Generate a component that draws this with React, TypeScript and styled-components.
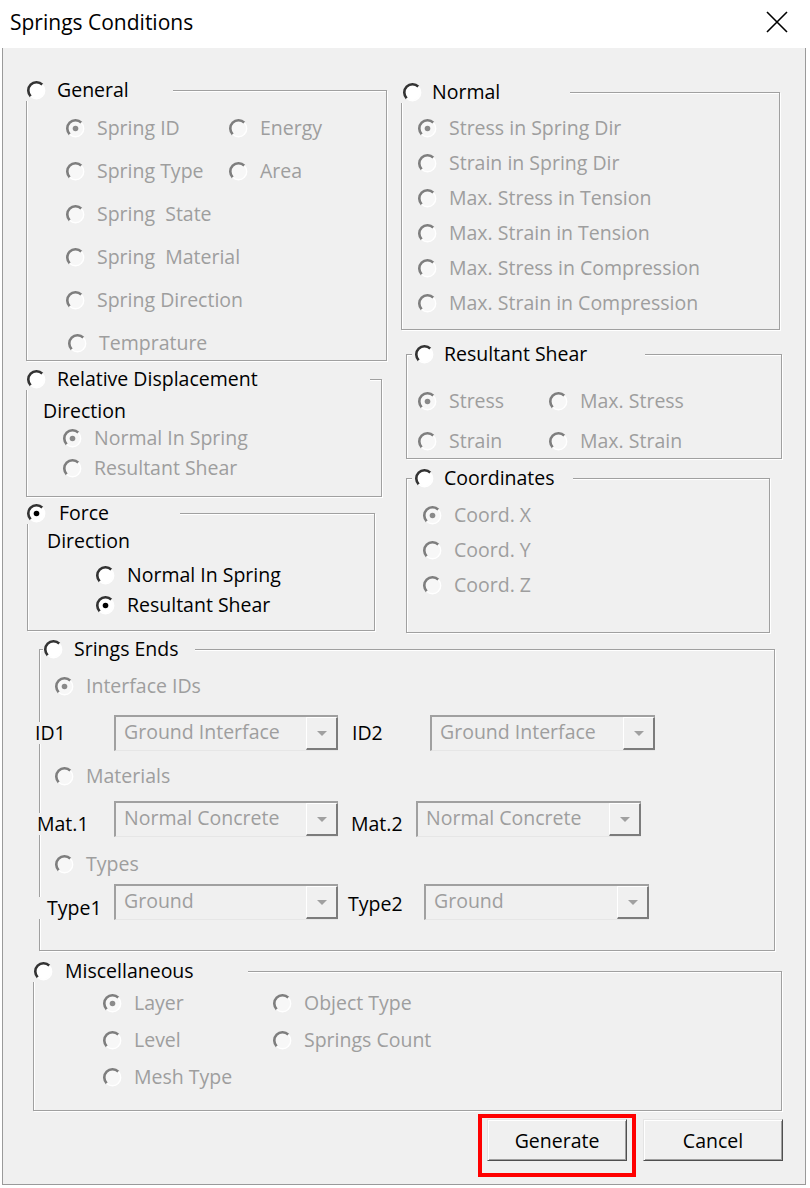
import React from 'react';
import styled, { createGlobalStyle } from 'styled-components';

const GlobalStyle = createGlobalStyle`
  html, body { margin: 0; padding: 0; background: #ffffff; }
  body { font-family: "Open Sans", "Noto Sans", sans-serif; }
  * { box-sizing: border-box; }
`;

const Window = styled.div`
  width: 804px;
  margin-left: 2px;
  display: flex;
  flex-direction: column;
`;

const TitleBar = styled.div`
  height: 48px;
  background: #ffffff;
  display: flex;
  align-items: center;
  justify-content: space-between;
  padding: 0 18px 4px 8px;
  font-size: 21px;
  color: #000;
`;

const CloseIcon = styled.svg`
  width: 22px;
  height: 22px;
`;

const Body = styled.div`
  background: #f0f0f0;
  border: 1px solid #9a9a9a;
  border-top: none;
  padding: 0 0 7px 0;
  display: flex;
  flex-direction: column;
`;

const TopArea = styled.div`
  display: flex;
  padding-left: 23px;
`;

const Column = styled.div<{ $w?: number; $ml?: number }>`
  display: flex;
  flex-direction: column;
  width: ${(p) => (p.$w ? `${p.$w}px` : 'auto')};
  margin-left: ${(p) => p.$ml ?? 0}px;
`;

const Frame = styled.div<{ $w: number; $h: number; $ml?: number; $mt?: number }>`
  width: ${(p) => p.$w}px;
  height: ${(p) => p.$h}px;
  margin-left: ${(p) => p.$ml ?? 0}px;
  margin-top: ${(p) => p.$mt ?? 0}px;
  border: 1px solid #a0a0a0;
  box-shadow: 1px 1px 0 #ffffff, inset 1px 1px 0 #ffffff;
  display: flex;
  flex-direction: column;
  flex-shrink: 0;
`;

const Header = styled.div<{ $w: number; $ml: number; $pl: number; $gap: number }>`
  height: 22px;
  margin-top: -12px;
  margin-left: ${(p) => p.$ml}px;
  width: ${(p) => p.$w}px;
  padding-left: ${(p) => p.$pl}px;
  background: #f0f0f0;
  display: flex;
  align-items: center;
  gap: ${(p) => p.$gap}px;
  flex-shrink: 0;
`;

const Text = styled.span<{ $off?: boolean }>`
  font-size: 19.5px;
  line-height: 22px;
  white-space: pre;
  color: ${(p) => (p.$off ? '#9e9e9e' : '#000000')};
`;

const OptionGrid = styled.div<{ $pt: number; $pl: number; $cols?: string; $gap: number }>`
  display: grid;
  grid-template-columns: ${(p) => p.$cols ?? 'auto'};
  justify-content: start;
  row-gap: ${(p) => p.$gap}px;
  padding-top: ${(p) => p.$pt}px;
  padding-left: ${(p) => p.$pl}px;
`;

const Option = styled.label<{ $ml?: number; $mt?: number }>`
  display: flex;
  align-items: center;
  gap: 12px;
  height: 22px;
  margin-left: ${(p) => p.$ml ?? 0}px;
  margin-top: ${(p) => p.$mt ?? 0}px;
`;

const SubLabel = styled.div<{ $pt: number; $pl: number }>`
  padding-top: ${(p) => p.$pt}px;
  padding-left: ${(p) => p.$pl}px;
  height: ${(p) => p.$pt + 22}px;
  font-size: 19.5px;
  line-height: 22px;
  color: #000;
`;

const FieldRow = styled.div<{ $mt: number }>`
  display: flex;
  align-items: flex-start;
  margin-left: -5px;
  margin-top: ${(p) => p.$mt}px;
`;

const FieldLabel = styled.span<{ $w: number; $ml?: number; $pl?: number; $dy: number }>`
  width: ${(p) => p.$w}px;
  margin-left: ${(p) => p.$ml ?? 0}px;
  margin-top: ${(p) => p.$dy}px;
  padding-left: ${(p) => p.$pl ?? 0}px;
  height: 22px;
  background: #f0f0f0;
  font-size: 19.5px;
  line-height: 22px;
  color: #000;
  flex-shrink: 0;
`;

const Combo = styled.div<{ $w: number }>`
  width: ${(p) => p.$w}px;
  height: 36px;
  display: flex;
  border-top: 2px solid #a0a0a0;
  border-left: 2px solid #a0a0a0;
  border-bottom: 1px solid #e6e6e6;
  background: #f0f0f0;
  flex-shrink: 0;
`;

const ComboText = styled.span`
  flex: 1;
  padding-left: 8px;
  font-size: 19.5px;
  line-height: 30px;
  color: #9e9e9e;
`;

const ComboButton = styled.span`
  width: 32px;
  height: 100%;
  border-top: 1px solid #ffffff;
  border-left: 1px solid #ffffff;
  border-right: 2px solid #7c7c7c;
  border-bottom: 2px solid #7c7c7c;
  display: flex;
  align-items: center;
  justify-content: center;
`;

const ComboArrow = styled.span`
  width: 0;
  height: 0;
  border-left: 5px solid transparent;
  border-right: 5px solid transparent;
  border-top: 5px solid #a0a0a0;
`;

const ButtonsRow = styled.div`
  display: flex;
  justify-content: flex-end;
  align-items: flex-start;
  gap: 7px;
  margin-top: 3px;
  padding-right: 22px;
`;

const Highlight = styled.div`
  border: 4px solid #ff0000;
  padding: 1px 5px 12px 5px;
`;

const PushButton = styled.button<{ $mt?: number }>`
  width: 140px;
  height: 42px;
  margin-top: ${(p) => p.$mt ?? 0}px;
  background: #f0f0f0;
  border: 1px solid;
  border-color: #e4e4e4 #4f4f4f #4f4f4f #e4e4e4;
  box-shadow: inset 1px 1px 0 #ffffff, inset -1px -1px 0 #a0a0a0;
  font-family: "Open Sans", "Noto Sans", sans-serif;
  font-size: 19.5px;
  color: #000;
  padding: 0;
`;

const RadioSvg = styled.svg`
  width: 19px;
  height: 19px;
  flex-shrink: 0;
`;

type RadioProps = { checked?: boolean; off?: boolean };

const Radio = ({ checked, off }: RadioProps) => (
  <RadioSvg viewBox="0 0 19 19">
    <circle cx="9.5" cy="9.5" r="7.8" fill={off ? '#f7f7f7' : '#ffffff'} />
    <path d="M15.3 3.7 A8.2 8.2 0 0 0 3.7 15.3" stroke={off ? '#7e7e7e' : '#333333'} strokeWidth="2.6" fill="none" />
    <path d="M3.7 15.3 A8.2 8.2 0 0 0 15.3 3.7" stroke="#ffffff" strokeWidth="1.4" fill="none" />
    {checked && <circle cx="9.5" cy="9.5" r="2.8" fill={off ? '#8a8a8a' : '#000000'} />}
  </RadioSvg>
);

type OptProps = { label: string; checked?: boolean; off?: boolean; ml?: number; mt?: number };

const Opt = ({ label, checked, off = true, ml, mt }: OptProps) => (
  <Option $ml={ml} $mt={mt}>
    <Radio checked={checked} off={off} />
    <Text $off={off}>{label}</Text>
  </Option>
);

type GroupProps = {
  title: string;
  checked?: boolean;
  w: number;
  h: number;
  ml?: number;
  mt?: number;
  hw: number;
  hml: number;
  hpl: number;
  hgap: number;
  children?: React.ReactNode;
};

const Group = ({ title, checked, w, h, ml, mt, hw, hml, hpl, hgap, children }: GroupProps) => (
  <Frame $w={w} $h={h} $ml={ml} $mt={mt}>
    <Header $w={hw} $ml={hml} $pl={hpl} $gap={hgap}>
      <Radio checked={checked} />
      <Text>{title}</Text>
    </Header>
    {children}
  </Frame>
);

const Select = ({ w, value }: { w: number; value: string }) => (
  <Combo $w={w}>
    <ComboText>{value}</ComboText>
    <ComboButton>
      <ComboArrow />
    </ComboButton>
  </Combo>
);

export default function App() {
  return (
    <>
      <GlobalStyle />
      <Window>
        <TitleBar>
          <span>Springs Conditions</span>
          <CloseIcon viewBox="0 0 22 22">
            <path d="M1 1 L21 21 M21 1 L1 21" stroke="#000" strokeWidth="1.6" fill="none" />
          </CloseIcon>
        </TitleBar>
        <Body>
          <TopArea>
            <Column $w={361}>
              <Group title="General" w={361} h={271} mt={42} hw={147} hml={-1} hpl={1} hgap={11}>
                <OptionGrid $pt={16} $pl={39} $cols="163px auto" $gap={21}>
                  <Opt label="Spring ID" checked />
                  <Opt label="Energy" />
                  <Opt label="Spring Type" />
                  <Opt label="Area" />
                  <Opt label="Spring  State" />
                  <span />
                  <Opt label="Spring  Material" />
                  <span />
                  <Opt label="Spring Direction" />
                  <span />
                  <Opt label="Temprature" ml={2} />
                </OptionGrid>
              </Group>
              <Group title="Relative Displacement" w={356} h={118} mt={18} hw={344} hml={-1} hpl={1} hgap={11}>
                <SubLabel $pt={10} $pl={16}>Direction</SubLabel>
                <OptionGrid $pt={5} $pl={36} $gap={8}>
                  <Opt label="Normal In Spring" checked />
                  <Opt label="Resultant Shear" />
                </OptionGrid>
              </Group>
              <Group title="Force" checked w={348} h={118} ml={1} mt={16} hw={153} hml={-1} hpl={0} hgap={13}>
                <SubLabel $pt={6} $pl={19}>Direction</SubLabel>
                <OptionGrid $pt={12} $pl={68} $gap={8}>
                  <Opt label="Normal In Spring" off={false} />
                  <Opt label="Resultant Shear" checked off={false} />
                </OptionGrid>
              </Group>
            </Column>
            <Column $ml={14}>
              <Group title="Normal" w={379} h={238} mt={44} hw={169} hml={-1} hpl={2} hgap={10}>
                <OptionGrid $pt={14} $pl={16} $gap={13}>
                  <Opt label="Stress in Spring Dir" checked />
                  <Opt label="Strain in Spring Dir" />
                  <Opt label="Max. Stress in Tension" />
                  <Opt label="Max. Strain in Tension" />
                  <Opt label="Max. Stress in Compression" />
                  <Opt label="Max. Strain in Compression" />
                </OptionGrid>
              </Group>
              <Group title="Resultant Shear" w={376} h={105} ml={5} mt={24} hw={233} hml={5} hpl={3} hgap={10}>
                <OptionGrid $pt={25} $pl={11} $cols="131px auto" $gap={18}>
                  <Opt label="Stress" checked />
                  <Opt label="Max. Stress" />
                  <Opt label="Strain" />
                  <Opt label="Max. Strain" />
                </OptionGrid>
              </Group>
              <Group title="Coordinates" w={364} h={155} ml={5} mt={19} hw={161} hml={5} hpl={3} hgap={10}>
                <OptionGrid $pt={15} $pl={16} $gap={13}>
                  <Opt label="Coord. X" checked />
                  <Opt label="Coord. Y" />
                  <Opt label="Coord. Z" />
                </OptionGrid>
              </Group>
            </Column>
          </TopArea>
          <Group title="Srings Ends" w={736} h={302} ml={36} mt={16} hw={152} hml={3} hpl={1} hgap={11}>
            <Opt label="Interface IDs" checked ml={15} mt={15} />
            <FieldRow $mt={18}>
              <FieldLabel $w={79} $dy={7}>ID1</FieldLabel>
              <Select w={224} value="Ground Interface" />
              <FieldLabel $w={78} $ml={14} $dy={7}>ID2</FieldLabel>
              <Select w={225} value="Ground Interface" />
            </FieldRow>
            <Opt label="Materials" ml={15} mt={14} />
            <FieldRow $mt={14}>
              <FieldLabel $w={79} $pl={2} $dy={12}>Mat.1</FieldLabel>
              <Select w={224} value="Normal Concrete" />
              <FieldLabel $w={65} $ml={13} $dy={12}>Mat.2</FieldLabel>
              <Select w={225} value="Normal Concrete" />
            </FieldRow>
            <Opt label="Types" ml={15} mt={16} />
            <FieldRow $mt={9}>
              <FieldLabel $w={79} $pl={12} $dy={13}>Type1</FieldLabel>
              <Select w={224} value="Ground" />
              <FieldLabel $w={76} $ml={10} $dy={9}>Type2</FieldLabel>
              <Select w={225} value="Ground" />
            </FieldRow>
          </Group>
          <Group title="Miscellaneous" w={749} h={140} ml={30} mt={20} hw={215} hml={-1} hpl={1} hgap={12}>
            <OptionGrid $pt={10} $pl={69} $cols="170px auto" $gap={15}>
              <Opt label="Layer" checked />
              <Opt label="Object Type" />
              <Opt label="Level" />
              <Opt label="Springs Count" />
              <Opt label="Mesh Type" />
            </OptionGrid>
          </Group>
          <ButtonsRow>
            <Highlight>
              <PushButton>Generate</PushButton>
            </Highlight>
            <PushButton $mt={5}>Cancel</PushButton>
          </ButtonsRow>
        </Body>
      </Window>
    </>
  );
}
